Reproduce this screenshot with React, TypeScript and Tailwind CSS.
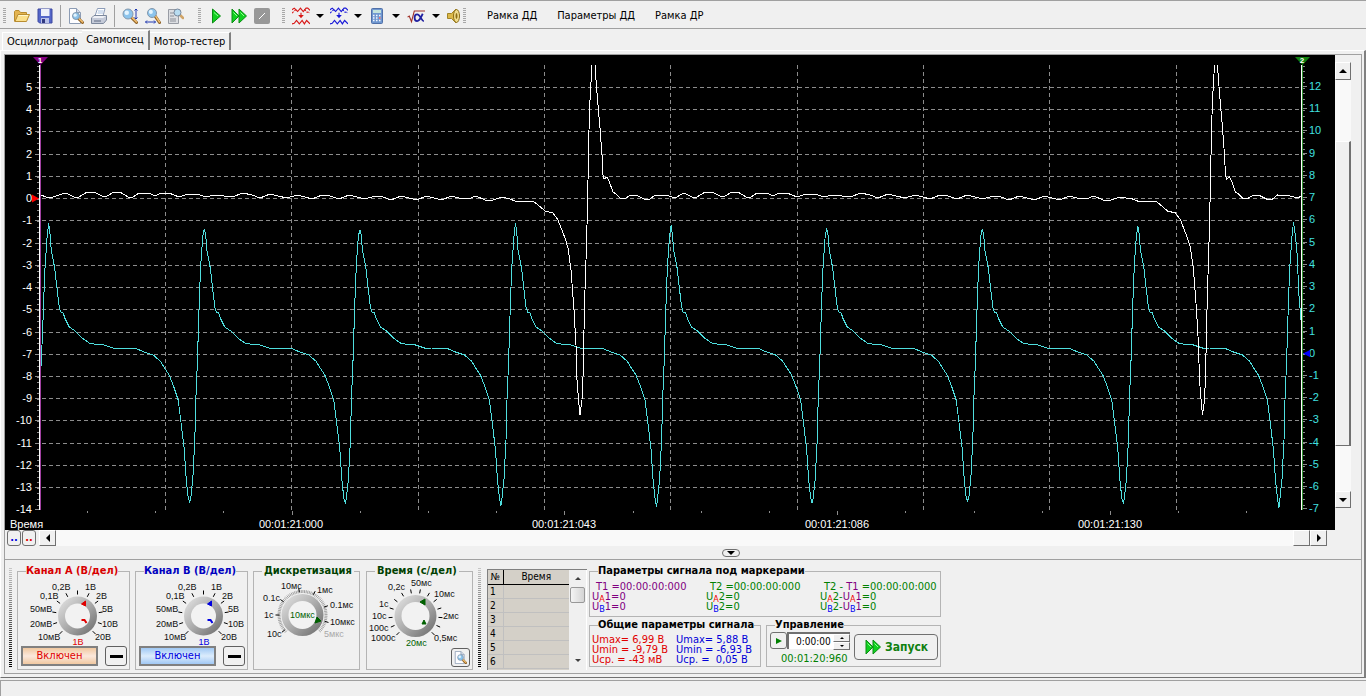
import type { ReactNode } from 'react';

const UI_FONT = "font-['DejaVu_Sans_Condensed','Noto_Sans',sans-serif]";
const PLOT_FONT = "font-['Liberation_Sans',Arial,sans-serif]";

type Point = [number, number];

const toPath = (points: Point[]) => 'M' + points.map(([x, y]) => `${x} ${y}`).join('L');

/* ---------- signal data ---------- */

const CYLINDER_STEP = 155.6;
const PEAKS = [223, 229, 230, 223, 225, 228, 229, 226, 222];
const TROUGHS = [502, 503, 506, 507, 503, 501, 503, 508];

const RISE: Point[] = [
  [-13.5, 498], [-11.5, 479], [-9.5, 440], [-8.5, 400], [-7, 364], [-5.5, 316], [-4.5, 287], [-3.5, 264], [-1.5, 236],
];

const FALL: Point[] = [
  [1.5, 236], [2.5, 250], [6, 268], [8.5, 290], [10.5, 307], [12, 312], [14.5, 313], [16.5, 319], [20.5, 327],
  [26.5, 331], [33.5, 338], [40.5, 343], [45.5, 344], [55.5, 345], [64.5, 348], [71.5, 348], [88.5, 349],
  [95.5, 352], [104.5, 355], [111.5, 361], [116.5, 369], [120.5, 375], [125.5, 388], [129.5, 400], [132.5, 424],
  [135.5, 449], [137.5, 479], [139.5, 498],
];

const channelB: Point[] = [[41, 366], [42, 345]];
PEAKS.forEach((top, i) => {
  const x0 = 48.7 + i * CYLINDER_STEP;
  const rise = i === 0 ? RISE.slice(5) : RISE;
  rise.forEach(([dx, y]) => channelB.push([x0 + dx, y]));
  channelB.push([x0, top]);
  if (i === PEAKS.length - 1) {
    channelB.push([x0 + 2, 236], [x0 + 4, 258], [x0 + 5, 290], [1301, 320]);
    return;
  }
  FALL.forEach(([dx, y]) => channelB.push([x0 + dx, y]));
  channelB.push([x0 + 141, TROUGHS[i]]);
});

const IDLE: Point[] = [
  [41, 195], [46, 197], [53, 197], [62, 194], [66, 193], [74, 197], [79, 197], [87, 192], [94, 192], [102, 196],
  [107, 196], [114, 192], [120, 192], [128, 197], [133, 197], [139, 193], [149, 193], [155, 196], [161, 193],
  [169, 193], [179, 197], [188, 194], [197, 194], [206, 197], [214, 195], [224, 196], [232, 197], [243, 193],
  [252, 195], [260, 198], [270, 194], [278, 196], [287, 198], [297, 195], [305, 197], [312, 199], [322, 195],
  [330, 196], [339, 199], [349, 195], [357, 197], [365, 199], [375, 196], [383, 197], [391, 200], [401, 196],
  [409, 198], [417, 200], [426, 196], [434, 198], [442, 200], [451, 196], [459, 198], [468, 199], [476, 196],
  [485, 200], [493, 200], [502, 197],
];

const SPIKE: Point[] = [
  [510, 199], [515, 201], [533, 201], [537, 204], [545, 211], [553, 213], [558, 220], [565, 238], [568, 248],
  [571, 270], [574, 310], [576, 345], [577, 380], [579, 405], [580, 415], [582, 400], [583, 377], [584, 330],
  [585, 290], [586, 260], [587, 225], [588, 180], [589, 130], [590, 100], [592, 65],
];

const DECAY: Point[] = [
  [595, 65], [596, 80], [598, 105], [600, 128], [602, 155], [603, 175], [604, 179], [607, 177], [609, 181],
  [613, 192], [616, 194], [620, 198], [626, 198], [631, 195], [636, 195], [644, 199], [650, 199], [655, 195],
  [669, 196], [675, 198],
];

const CRANK_TURN = 622.5;
const shift = (points: Point[]): Point[] => points.map(([x, y]) => [x + CRANK_TURN, y]);

const middle: Point[] = [
  ...DECAY,
  ...IDLE.slice(4).map(([x, y]): Point => [x + 618, y]),
];

const channelA = [
  toPath([...IDLE, ...SPIKE]),
  toPath([...middle, ...shift(SPIKE)]),
  toPath([...shift(DECAY).filter(([x]) => x < 1290), [1290, 196], [1298, 198], [1301, 196]]),
];

/* ---------- chart ---------- */

const rowY = (i: number) => Math.round(87 + i * 22.23);
const ROWS = Array.from({ length: 20 }, (_, i) => i);
const MINOR = Array.from({ length: 80 }, (_, i) => Math.round(66 + i * 5.5575 - 0.5)).filter((y) => y < 509);
const COLUMNS = Array.from({ length: 9 }, (_, i) => Math.round(165 + i * 126.35));
const TIMES = ['00:01:21:000', '00:01:21:043', '00:01:21:086', '00:01:21:130'];

function Chart() {
  return (
    <svg
      viewBox="5 55 1330 475"
      className={`block h-auto w-full bg-black ${PLOT_FONT}`}
      fontSize="11"
      role="img"
      aria-label="Самописец"
    >
      <g stroke="#8c8c8c" strokeDasharray="4 3" shapeRendering="crispEdges">
        {ROWS.slice(0, 19).map((i) => (
          <line key={i} x1="42" x2="1301" y1={rowY(i) + 0.5} y2={rowY(i) + 0.5} />
        ))}
        {COLUMNS.map((x) => (
          <line key={x} x1={x + 0.5} x2={x + 0.5} y1="65" y2="510" />
        ))}
      </g>
      <g stroke="#8c8c8c" shapeRendering="crispEdges">
        {MINOR.map((y) => (
          <path key={y} d={`M37 ${y + 0.5}h2M1303 ${y + 0.5}h2`} />
        ))}
        {ROWS.map((i) => (
          <path key={i} d={`M35 ${rowY(i) + 0.5}h4M1303 ${rowY(i) - 0.5}h4`} />
        ))}
        {Array.from({ length: 18 }, (_, i) => (
          <path key={i} d={`M${Math.round(87 + i * 68.2) + 0.5} ${511}v${i % 4 === 3 ? 4 : 2}`} />
        ))}
      </g>
      <g fill="#fff" textAnchor="end">
        {ROWS.map((i) => (
          <text key={i} x="32" y={rowY(i) + 4}>{5 - i}</text>
        ))}
      </g>
      <g fill="#40e0e0">
        {ROWS.map((i) => (
          <text key={i} x="1309" y={rowY(i) + 3}>{12 - i}</text>
        ))}
      </g>
      <g fill="none" shapeRendering="crispEdges">
        <path d={toPath(channelB)} stroke="#4fdede" />
        {channelA.map((d) => (
          <path key={d} d={d} stroke="#fff" />
        ))}
        <path d="M39.5 65V510M1301.5 65V510" stroke="#fff" />
        <path d="M40.5 65V510" stroke="#a040a0" />
        <path d="M1302.5 65V510" stroke="#2f8f2f" />
      </g>
      <path d="M33 57H48L40.500 65Z" fill="#800080" />
      <path d="M1295 57H1310L1302.500 65Z" fill="#108010" />
      <path d="M32 194.500L39 198.500L32 202.500Z" fill="#f00" />
      <path d="M1310 350L1303 353.500L1310 357Z" fill="#00f" />
      <g fill="#fff" fontSize="8" fontWeight="bold" textAnchor="middle">
        <text x="40" y="63">1</text>
        <text x="1302" y="63">2</text>
      </g>
      <g fill="#fff">
        <text x="10" y="528">Время</text>
        {TIMES.map((time, i) => (
          <text key={time} x={291 + i * 273} y="528" textAnchor="middle">{time}</text>
        ))}
      </g>
    </svg>
  );
}

/* ---------- toolbar ---------- */

function Grip() {
  return (
    <span className="h-4 w-[3px] shrink-0 bg-[repeating-linear-gradient(to_bottom,#a8a8a8_0px,#a8a8a8_1px,#f0f0f0_1px,#f0f0f0_2px)]" />
  );
}

function Separator() {
  return <span className="h-[22px] w-px shrink-0 bg-[#a0a0a0]" />;
}

function ToolButton({ label, wide = false, children }: { label: string; wide?: boolean; children: ReactNode }) {
  return (
    <button type="button" aria-label={label} className={wide ? 'h-[18px] w-[18px] shrink-0' : 'h-4 w-4 shrink-0'}>
      {children}
    </button>
  );
}

function DropArrow() {
  return (
    <button type="button" aria-label="Ещё" className="w-2 shrink-0">
      <svg viewBox="0 0 8 4" className="block h-1 w-2"><path d="M0 0H8L4 4Z" fill="#000" /></svg>
    </button>
  );
}

function Lens({ x = 6, y = 6, r = 5 }: { x?: number; y?: number; r?: number }) {
  const edge = r * 0.7;
  return (
    <g>
      <path d={`M${x + edge} ${y + edge}L14.500 14.500`} stroke="#906428" strokeWidth="3" strokeLinecap="round" />
      <path d={`M${x + edge + 0.5} ${y + edge}L14.500 14`} stroke="#f4c070" strokeWidth="1.400" strokeLinecap="round" />
      <circle cx={x} cy={y} r={r} fill="#8cc4ec" stroke="#8498ac" strokeWidth="1" />
      <circle cx={x - r * 0.25} cy={y - r * 0.25} r={r * 0.45} fill="#e4f4fe" />
    </g>
  );
}

function Icon({ children }: { children: ReactNode }) {
  return <svg viewBox="0 0 16 16" className="block h-full w-full" fill="none">{children}</svg>;
}

function PreviewIcon() {
  return (
    <Icon>
      <path d="M1.500 0.500H8.500L12.500 4.500V15.500H1.500Z" fill="#fdfdff" stroke="#8c9cb4" />
      <path d="M8.500 0.500V4.500H12.500" fill="#d0d8e8" stroke="#8c9cb4" />
      <Lens x={8} y={8} r={3.5} />
    </Icon>
  );
}

function FastForward() {
  return (
    <Icon>
      <path d="M1 1L8 8L1 15ZM8 1L15.500 8L8 15Z" fill="#10d020" stroke="#0c8c14" />
      <path d="M2.500 4.500L6 8M9.500 4.500L13 8" stroke="#90ff90" />
    </Icon>
  );
}

function WaveIcon({ color }: { color: string }) {
  return (
    <Icon>
      <path d="M0 2.500L2 1L5 4L7.500 1L10 4L12.500 1L14 1L16 3" stroke={color} />
      <path d="M0 5.500L2 3.500L4.500 1.500M11 2L13 4.500L16 5" stroke={color} strokeDasharray="2 1" />
      <path d="M0 15L2 14.500L4 12L6.500 15L9 12L11 15L13 12L16 15" stroke={color} />
      <path d="M8 5V8" stroke={color} />
      <path d="M5.500 7H10.500L8 10Z" fill={color} />
    </Icon>
  );
}

function Toolbar() {
  return (
    <header className="flex h-[29px] items-center border-y border-[#a0a0a0] bg-[#f0f0f0] pt-0.5 pl-[3px]">
      <Grip />
      <div className="ml-2 flex items-center gap-[7px]">
        <ToolButton label="Открыть">
          <Icon>
            <path d="M0.500 13.500V3.500L1.500 2.500H5L6.500 4.500H12.500V7" fill="#e4b450" stroke="#b88c30" />
            <path d="M1 13.500L4 6.500H15.500L12.500 13.500Z" fill="#fbe08c" stroke="#b88c30" />
            <path d="M4.500 7.500H14" stroke="#fff6cc" />
          </Icon>
        </ToolButton>
        <ToolButton label="Сохранить">
          <Icon>
            <path d="M1 1H15V15H2.500L1 13.500Z" fill="#5466c8" stroke="#3c48a0" />
            <path d="M4 1H12.500V8H4Z" fill="#eef0fa" />
            <path d="M4 10H12V15H4Z" fill="#b8c0e8" />
            <path d="M5 11H8V15H5Z" fill="#303880" />
          </Icon>
        </ToolButton>
        <Separator />
        <ToolButton label="Просмотр"><PreviewIcon /></ToolButton>
        <ToolButton label="Печать">
          <Icon>
            <path d="M4 8L6.500 0.500H14L12 8Z" fill="#fff" stroke="#8c9cb8" />
            <path d="M7 3H12.500M6.500 5H12" stroke="#a8c0e0" />
            <path d="M0.500 10L3 7.500H15.500V12L12.500 15.500H0.500Z" fill="#c4cad8" stroke="#7c889c" />
            <path d="M1 10H12L15 8H3.500Z" fill="#eef0f6" />
            <path d="M3 13H10" stroke="#5c6880" />
          </Icon>
        </ToolButton>
        <Separator />
        <ToolButton label="Масштаб по вертикали">
          <Icon>
            <Lens />
            <path d="M14 1V11M12.500 2.500L14 1L15.500 2.500M12.500 9.500L14 11L15.500 9.500" stroke="#2038b0" />
          </Icon>
        </ToolButton>
        <ToolButton label="Масштаб по горизонтали">
          <Icon>
            <Lens x={7} y={5} r={4.5} />
            <path d="M0.500 14H10.500M2 12.500L0.500 14L2 15.500M9 12.500L10.500 14L9 15.500" stroke="#2038b0" />
          </Icon>
        </ToolButton>
        <ToolButton label="Поиск">
          <Icon>
            <path d="M0.500 1.500H10.500V15.500H0.500Z" fill="#dcdee2" stroke="#989ca4" />
            <path d="M2 5H6M2 8H6M2 11H8M2 13H8" stroke="#8c9098" />
            <path d="M12 7L15 10" stroke="#d0a468" strokeWidth="2.500" strokeLinecap="round" />
            <circle cx="9.500" cy="4.500" r="3.500" fill="#b8dcf0" stroke="#78889c" />
          </Icon>
        </ToolButton>
      </div>
      <span className="w-[14px]" />
      <Grip />
      <div className="ml-[7px] flex items-center gap-[7px]">
        <ToolButton label="Пуск">
          <Icon>
            <path d="M4.500 1L12.500 8L4.500 15Z" fill="#10d020" stroke="#0c8c14" />
            <path d="M6 4.500L10 8" stroke="#90ff90" />
          </Icon>
        </ToolButton>
        <ToolButton label="Быстро"><FastForward /></ToolButton>
        <ToolButton label="Стоп">
          <Icon>
            <rect width="16" height="16" rx="2" fill="#989898" />
            <path d="M5 11L11 5" stroke="#fff" />
          </Icon>
        </ToolButton>
      </div>
      <span className="w-3" />
      <Grip />
      <div className="ml-[7px] flex items-center gap-1.5">
        <ToolButton label="Канал А" wide><WaveIcon color="#d81818" /></ToolButton>
        <DropArrow />
        <ToolButton label="Канал В" wide><WaveIcon color="#1818d8" /></ToolButton>
        <DropArrow />
      </div>
      <div className="ml-[7px] flex items-center gap-[7px]">
        <ToolButton label="Калькулятор">
          <Icon>
            <rect x="2.500" y="0.500" width="11" height="15" rx="1" fill="#7098d0" stroke="#5070a8" />
            <path d="M4 2H12V5H4Z" fill="#c4e4dc" />
            <path d="M4 7.500H12M4 10H12M4 12.500H12" stroke="#f4f8ff" strokeWidth="1.500" strokeDasharray="1.500 1.500" />
            <path d="M10 10H11.500" stroke="#e05050" strokeWidth="1.500" />
          </Icon>
        </ToolButton>
        <DropArrow />
        <ToolButton label="Формула" wide>
          <Icon>
            <path d="M0.500 9L2 8L4 13L6.500 3.500H16" stroke="#a03028" />
            <path d="M14 6C12.500 9 11.500 12.500 9 12.500C6 12.500 6 6.500 9 6.500C12 6.500 12.500 12.500 15 12.500" stroke="#2020a0" strokeWidth="1.600" />
          </Icon>
        </ToolButton>
        <DropArrow />
        <ToolButton label="Звук">
          <Icon>
            <path d="M0.500 5.500H4.500L9 1V15L4.500 10.500H0.500Z" fill="#dcb848" stroke="#a08428" />
            <ellipse cx="9.500" cy="8" rx="3" ry="6.500" fill="#f0dc8c" stroke="#8c6c14" />
            <ellipse cx="9.500" cy="8" rx="1" ry="3" fill="#8c6c14" />
          </Icon>
        </ToolButton>
      </div>
      <Grip />
      <nav className="ml-[21px] flex items-center gap-5 whitespace-nowrap">
        <button type="button">Рамка ДД</button>
        <button type="button">Параметры ДД</button>
        <button type="button">Рамка ДР</button>
      </nav>
    </header>
  );
}

function Tabs() {
  return (
    <div role="tablist" className="flex h-[21px] items-end pl-0.5">
      <button type="button" role="tab" className="h-[18px] w-20 border-t border-l border-white">Осциллограф</button>
      <button type="button" role="tab" aria-selected="true" className="h-5 w-[68px] border-t border-r-2 border-t-white border-r-[#808080] pb-0.5">
        Самописец
      </button>
      <button type="button" role="tab" className="h-[18px] w-[81px] border-t border-r-2 border-t-white border-r-[#808080]">Мотор-тестер</button>
    </div>
  );
}

/* ---------- scroll bars ---------- */

const RAISED = 'border border-t-white border-l-white border-r-[#707070] border-b-[#707070] bg-[#f0f0f0]';

function Arrow({ d }: { d: string }) {
  return <svg viewBox="0 0 8 8" className="mx-auto block size-2"><path d={d} fill="#000" /></svg>;
}

function VerticalScroll() {
  return (
    <div className="w-[26px] shrink-0 pt-[7px]">
      <div className="flex h-[446px] w-4 flex-col bg-[#f9f9f9]">
        <button type="button" aria-label="Вверх" className={`h-[18px] shrink-0 ${RAISED}`}><Arrow d="M0 6H8L4 2Z" /></button>
        <div className="h-[61px] shrink-0" />
        <div className={`flex-1 border-r-2 ${RAISED}`} />
        <div className="h-[45px] shrink-0" />
        <button type="button" aria-label="Вниз" className={`h-[17px] shrink-0 ${RAISED}`}><Arrow d="M0 2H8L4 6Z" /></button>
      </div>
    </div>
  );
}

function HorizontalScroll() {
  return (
    <div className="flex h-4 pr-[34px] pl-0.5">
      <button type="button" className="w-[14px] rounded-[3px] border border-[#707070] text-[11px] leading-3 font-bold text-[#0000e0]">..</button>
      <button type="button" className="ml-px w-[14px] rounded-[3px] border border-[#707070] text-[11px] leading-3 font-bold text-[#e00000]">..</button>
      <button type="button" aria-label="Влево" className={`ml-[3px] w-[17px] ${RAISED}`}><Arrow d="M6 0V8L2 4Z" /></button>
      <div className="flex-1 bg-[#f9f9f9]" />
      <div className={`w-[17px] ${RAISED}`} />
      <button type="button" aria-label="Вправо" className={`w-[17px] ${RAISED}`}><Arrow d="M2 0V8L6 4Z" /></button>
    </div>
  );
}

/* ---------- control panel ---------- */

function PanelGrip() {
  return (
    <div className="mt-[7px] h-[101px] w-[3px] shrink-0 bg-[linear-gradient(to_bottom,#c8c8c8,#000)]">
      <div className="h-full bg-[repeating-linear-gradient(to_bottom,#f0f0f0_0px,#f0f0f0_1px,transparent_1px,transparent_2px)]" />
    </div>
  );
}

interface GroupProps {
  title: string;
  className: string;
  legendClass?: string;
  children: ReactNode;
}

function Group({ title, className, legendClass = 'text-black', children }: GroupProps) {
  return (
    <fieldset className={`min-w-0 border border-[#b4b4b4] ${className}`}>
      <legend className={`ml-2 h-[14px] text-[11px] leading-[14px] font-bold whitespace-nowrap ${legendClass}`}>{title}</legend>
      {children}
    </fieldset>
  );
}

type DialLabel = { x: number; y: number; text: string; fill?: string };

interface DialProps {
  name: string;
  viewBox: string;
  cx: number;
  cy: number;
  r: number;
  hole: number;
  angles: number[];
  labels: DialLabel[];
  toothed?: boolean;
  children: ReactNode;
}

function Dial({ name, viewBox, cx, cy, r, hole, angles, labels, toothed = false, children }: DialProps) {
  const spoke = (deg: number, from: number, to: number) => {
    const a = (deg * Math.PI) / 180;
    return `M${cx + from * Math.sin(a)} ${cy - from * Math.cos(a)}L${cx + to * Math.sin(a)} ${cy - to * Math.cos(a)}`;
  };
  return (
    <svg viewBox={viewBox} className={`block h-[68px] w-full overflow-visible ${PLOT_FONT}`} fontSize="9" role="img" aria-label={name}>
      <defs>
        <linearGradient id={`ring-${cx}`} x1="0" y1="0" x2="1" y2="1">
          <stop offset="0.100" stopColor="#dcdcdc" />
          <stop offset="0.500" stopColor="#acacac" />
          <stop offset="0.900" stopColor="#747474" />
        </linearGradient>
      </defs>
      {toothed && (
        <path
          d={Array.from({ length: 68 }, (_, i) => spoke(-135 + i * 4, r + 1, r + 4)).join('')}
          stroke="#a0a0a0"
        />
      )}
      <path d={angles.map((deg) => spoke(deg, r + 2, r + 6)).join('')} stroke="#000" />
      <circle cx={cx} cy={cy} r={r} fill={`url(#ring-${cx})`} />
      <circle cx={cx} cy={cy} r={hole} fill="#f2f2f2" />
      {children}
      {labels.map((label) => (
        <text key={label.text + label.y} x={label.x} y={label.y + 3} fill={label.fill ?? '#101010'}>{label.text}</text>
      ))}
    </svg>
  );
}

const VOLT_LABELS: DialLabel[] = [
  { x: 52, y: 587, text: '0,2В' },
  { x: 85, y: 587, text: '1В' },
  { x: 40, y: 596, text: '0,1В' },
  { x: 96, y: 596, text: '2В' },
  { x: 30, y: 609, text: '50мВ' },
  { x: 102, y: 609, text: '5В' },
  { x: 30, y: 624, text: '20мВ' },
  { x: 102, y: 624, text: '10В' },
  { x: 38, y: 637, text: '10мВ' },
  { x: 95, y: 637, text: '20В' },
];

interface ChannelProps {
  title: string;
  color: string;
  legendClass: string;
  buttonClass: string;
  viewBox: string;
  cx: number;
}

function Channel({ title, color, legendClass, buttonClass, viewBox, cx }: ChannelProps) {
  return (
    <Group title={title} className="h-[106px] w-[113px] shrink-0" legendClass={legendClass}>
      <Dial
        name={title}
        viewBox={viewBox}
        cx={cx}
        cy={616}
        r={19.5}
        hole={12.5}
        angles={Array.from({ length: 11 }, (_, i) => -135 + i * 27)}
        labels={[
          ...VOLT_LABELS.map((label) => ({ ...label, x: label.x + cx - 77.5 })),
          { x: cx - 5, y: 642, text: '1В', fill: color },
        ]}
      >
        <path d={`M${cx + 4} 604L${cx + 8} 601V606Z`} fill={color} stroke={color} />
        <path d={`M${cx + 4} 620H${cx + 7}L${cx + 9} 623`} stroke={color} strokeWidth="2" fill="none" />
      </Dial>
      <div className="flex justify-between pr-0.5 pl-[3px]">
        <button type="button" className={`h-5 w-[77px] border-2 border-[#808080] text-[11px] leading-4 ${buttonClass}`}>
          Включен
        </button>
        <button type="button" aria-label="Инверсия" className="flex h-5 w-[22px] items-center justify-center rounded-[3px] border border-[#606060]">
          <span className="h-[3px] w-[13px] bg-black" />
        </button>
      </div>
    </Group>
  );
}

const GREEN = '#006000';

function Sampling() {
  return (
    <Group title="Дискретизация" className="h-[106px] w-[107px] shrink-0" legendClass="px-0.5 text-[#004000]">
      <Dial
        name="Дискретизация"
        viewBox="254 578 105 68"
        cx={302.5}
        cy={615}
        r={21}
        hole={14}
        toothed
        angles={[-130, -90, -55, -8, 28, 70, 106]}
        labels={[
          { x: 281, y: 586, text: '10мс' },
          { x: 317, y: 590, text: '1мс' },
          { x: 263, y: 598, text: '0.1с' },
          { x: 330, y: 605, text: '0.1мс' },
          { x: 264, y: 615, text: '1с' },
          { x: 330, y: 622, text: '10мкс' },
          { x: 267, y: 634, text: '10с' },
          { x: 324, y: 634, text: '5мкс', fill: '#a8a8a8' },
          { x: 290, y: 615, text: '10мкс', fill: GREEN },
        ]}
      >
        <path d="M317 617L321 621L315 623Z" fill={GREEN} stroke={GREEN} />
      </Dial>
    </Group>
  );
}

function TimeBase() {
  return (
    <Group title="Время (с/дел)" className="ml-px h-[106px] w-[107px] shrink-0" legendClass="px-0.5 text-[#004000]">
      <Dial
        name="Время"
        viewBox="367 578 105 68"
        cx={415.5}
        cy={616}
        r={21}
        hole={14}
        angles={Array.from({ length: 14 }, (_, i) => -135 + i * 20.77)}
        labels={[
          { x: 388, y: 587, text: '0,2с' },
          { x: 411, y: 583, text: '50мс' },
          { x: 434, y: 594, text: '10мс' },
          { x: 379, y: 604, text: '1с' },
          { x: 372, y: 616, text: '10с' },
          { x: 443, y: 616, text: '2мс' },
          { x: 369, y: 628, text: '100с' },
          { x: 371, y: 638, text: '1000с' },
          { x: 434, y: 638, text: '0,5мс' },
          { x: 406, y: 643, text: '20мс', fill: GREEN },
        ]}
      >
        <path d="M420 602L425 599V605ZM422 624L424 620L426 624Z" fill={GREEN} stroke={GREEN} />
      </Dial>
      <button type="button" aria-label="Просмотр" className="mt-0.5 mr-0.5 ml-auto block size-[19px] rounded-[3px] border border-[#606060] p-0.5">
        <PreviewIcon />
      </button>
    </Group>
  );
}

function MarkerTable() {
  return (
    <div className="mt-[9px] flex h-[101px] w-[100px] shrink-0 overflow-hidden border-t border-l border-[#808080]">
      <div className="flex-1 overflow-hidden bg-[#d4d0c8]">
        <table className="w-full table-fixed border-collapse text-[10px] leading-[13px]">
          <thead>
            <tr className="h-[14px] border-b border-black">
              <th scope="col" className="w-[15px] border-r border-black p-0 font-normal">№</th>
              <th scope="col" className="p-0 font-normal">Время</th>
            </tr>
          </thead>
          <tbody>
            {[1, 2, 3, 4, 5, 6].map((row) => (
              <tr key={row} className="h-[14px] border-b border-[#c0c0c0]">
                <td className="border-r border-[#c0c0c0] p-0 pl-0.5">{row}</td>
                <td className="p-0" />
              </tr>
            ))}
          </tbody>
        </table>
      </div>
      <div className="flex w-[18px] shrink-0 flex-col items-center border-r border-white bg-[#f0f0f0]">
        <button type="button" aria-label="Вверх" className="flex h-[17px] items-center">
          <svg viewBox="0 0 6 3" className="block h-[3px] w-1.5"><path d="M0 3H6L3 0Z" fill="#404040" /></svg>
        </button>
        <div className="h-4 w-[15px] rounded-xs border border-[#989898] bg-linear-to-r from-[#f4f4f4] to-[#d4d4d4]" />
        <button type="button" aria-label="Вниз" className="mt-auto flex h-[19px] items-center">
          <svg viewBox="0 0 6 3" className="block h-[3px] w-1.5"><path d="M0 0H6L3 3Z" fill="#404040" /></svg>
        </button>
      </div>
    </div>
  );
}

const MARKER_COLORS = { 1: 'text-[#800080]', 2: 'text-[#008000]' };

function Level({ channel, marker }: { channel: 'A' | 'B'; marker: 1 | 2 }) {
  return (
    <span className={MARKER_COLORS[marker]}>
      U<span className={`align-[-2px] text-[9px] leading-none ${channel === 'A' ? 'text-[#f00000]' : 'text-[#0000f0]'}`}>{channel}</span>{marker}
    </span>
  );
}

function MarkerParams() {
  return (
    <Group title="Параметры сигнала под маркерами" className="h-[53px] w-[352px]">
      <div className="grid auto-rows-[10px] grid-cols-[114px_114px_1fr] pt-1 pl-0.5 text-[11px] leading-[10px] whitespace-pre text-[#008000]">
        <div className="pl-1 text-[#800080]">T1 =00:00:00:000</div>
        <div className="pl-1">T2 =00:00:00:000</div>
        <div className="pl-1">T2 - <span className="text-[#800080]">T1</span> =00:00:00:000</div>
        {(['A', 'B'] as const).map((channel) => [
          <div key={channel + 1} className="text-[#800080]"><Level channel={channel} marker={1} />=0</div>,
          <div key={channel + 2}><Level channel={channel} marker={2} />=0</div>,
          <div key={channel + 3}>
            <Level channel={channel} marker={2} />-<Level channel={channel} marker={1} />=0
          </div>,
        ])}
      </div>
    </Group>
  );
}

function CommonParams() {
  return (
    <Group title="Общие параметры сигнала" className="h-[49px] w-[172px]">
      <div className="grid grid-cols-[84px_1fr] pt-[3px] pl-0.5 text-[11px] leading-[10px] whitespace-pre">
        <div className="text-[#e00000]">
          <div>Umax= 6,99 В</div>
          <div>Umin = -9,79 В</div>
          <div>Uср. = -43 мВ</div>
        </div>
        <div className="text-[#0000d8]">
          <div>Umax= 5,88 В</div>
          <div>Umin = -6,93 В</div>
          <div>Uср. =  0,05 В</div>
        </div>
      </div>
    </Group>
  );
}

function RunControls() {
  return (
    <Group title="Управление" className="h-[49px] w-[175px]">
      <div className="flex justify-between pr-0.5 pl-[3px]">
        <div className="flex flex-col">
          <div className="flex">
            <button type="button" aria-label="Старт" className="flex h-[17px] w-[17px] items-center justify-center rounded-[3px] border border-[#707070]">
              <svg viewBox="0 0 6 6" className="block size-1.5"><path d="M0 0L6 3L0 6Z" fill="#008000" /></svg>
            </button>
            <input
              aria-label="Время записи"
              defaultValue="0:00:00"
              className="h-[17px] w-[46px] border-t-2 border-l-2 border-[#707070] bg-white pl-[7px] text-[10px] text-black"
            />
            <div className="flex w-[17px] flex-col border-t-2 border-[#707070]">
              <button type="button" aria-label="Больше" className={`flex h-2 items-center justify-center ${RAISED}`}>
                <svg viewBox="0 0 4 2" className="block h-0.5 w-1"><path d="M0 2H4L2 0Z" /></svg>
              </button>
              <button type="button" aria-label="Меньше" className={`flex h-2 items-center justify-center ${RAISED}`}>
                <svg viewBox="0 0 4 2" className="block h-0.5 w-1"><path d="M0 0H4L2 2Z" /></svg>
              </button>
            </div>
          </div>
          <output className="mt-0.5 ml-[11px] text-[11px] leading-[14px] text-[#008000]">00:01:20:960</output>
        </div>
        <button type="button" className="mt-0.5 flex h-[26px] w-[84px] items-center gap-1 rounded-[4px] border border-[#707070] pl-2.5 text-[12px] font-bold text-[#108010]">
          <span className="size-4"><FastForward /></span>
          Запуск
        </button>
      </div>
    </Group>
  );
}

function ControlPanel() {
  return (
    <section className="flex h-[114px] border-b border-[#a0a0a0] pl-1">
      <PanelGrip />
      <div className="mt-1 ml-[5px] flex shrink-0 gap-[5px]">
        <Channel
          title="Канал А (В/дел)"
          color="#e00000"
          legendClass="text-[#d80000]"
          buttonClass="bg-linear-to-b from-[#f0c8a0] via-[#fbe8dc] to-[#f0c8a0] text-[#e00000]"
          viewBox="18 578 111 68"
          cx={77.5}
        />
        <Channel
          title="Канал В (В/дел)"
          color="#0000e0"
          legendClass="text-[#0000c0]"
          buttonClass="bg-linear-to-b from-[#a0c8f4] via-[#dcecfc] to-[#a0c8f4] text-[#0000e0]"
          viewBox="136 578 111 68"
          cx={203.5}
        />
        <Sampling />
        <TimeBase />
      </div>
      <span className="w-[5px] shrink-0" />
      <PanelGrip />
      <span className="w-[6px] shrink-0" />
      <MarkerTable />
      <div className="mt-1 ml-0.5 flex flex-col gap-px">
        <MarkerParams />
        <div className="flex gap-[5px]">
          <CommonParams />
          <RunControls />
        </div>
      </div>
    </section>
  );
}

export default function App() {
  return (
    <main className={`flex min-h-screen flex-col bg-[#f0f0f0] text-[11px] leading-[14px] text-black ${UI_FONT}`}>
      <Toolbar />
      <Tabs />
      <div className="border-t border-r-2 border-b border-l border-t-white border-r-[#808080] border-b-[#707070] border-l-white pt-[3px] pr-0.5 pb-[3px] pl-[3px]">
        <div className="border-t border-r border-l border-[#a0a0a0]">
          <div className="flex">
            <div className="min-w-0 flex-1"><Chart /></div>
            <VerticalScroll />
          </div>
          <HorizontalScroll />
          <div className="flex h-[14px] items-center justify-center border-b border-[#a0a0a0] pl-[95px]">
            <button type="button" aria-label="Свернуть" className="flex h-2 w-[18px] items-center justify-center rounded-[4px] border border-[#707070]">
              <svg viewBox="0 0 8 4" className="block h-1 w-2"><path d="M0 0H8L4 4Z" /></svg>
            </button>
          </div>
          <ControlPanel />
        </div>
      </div>
      <footer className="mt-0.5 flex-1 border-t border-l border-[#a0a0a0]" />
    </main>
  );
}
